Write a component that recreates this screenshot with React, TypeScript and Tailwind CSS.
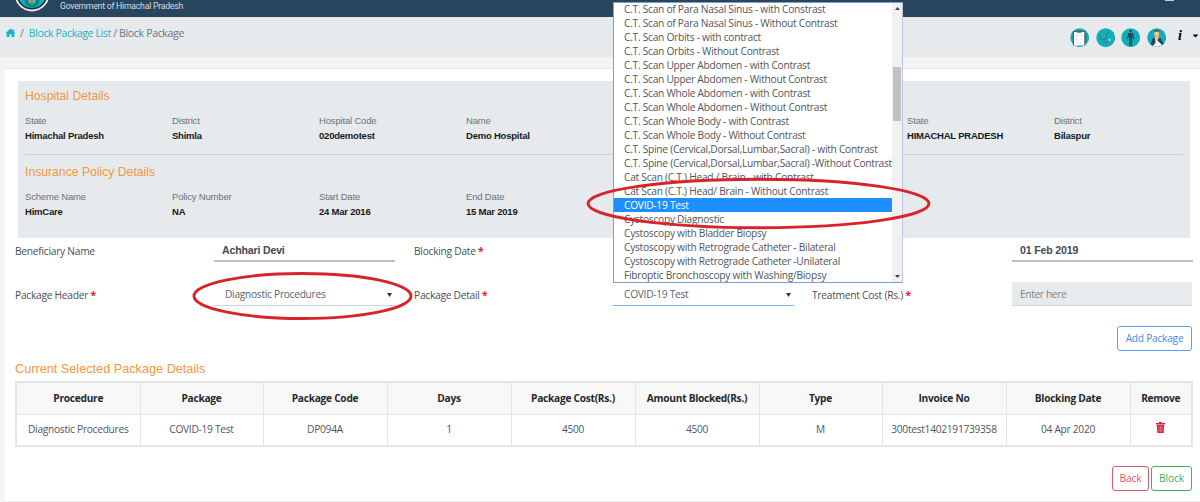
import { FaCaretDown } from "react-icons/fa";

type Detail = {
  label: string;
  value: string;
  col?: string;
};

const HOSPITAL: Detail[] = [
  { label: "State", value: "Himachal Pradesh" },
  { label: "District", value: "Shimla" },
  { label: "Hospital Code", value: "020demotest" },
  { label: "Name", value: "Demo Hospital" },
  { label: "State", value: "HIMACHAL PRADESH", col: "col-start-7" },
  { label: "District", value: "Bilaspur" },
];

const POLICY: Detail[] = [
  { label: "Scheme Name", value: "HimCare" },
  { label: "Policy Number", value: "NA" },
  { label: "Start Date", value: "24 Mar 2016" },
  { label: "End Date", value: "15 Mar 2019" },
];

const OPTIONS = [
  "C.T. Scan of Para Nasal Sinus - with Constrast",
  "C.T. Scan of Para Nasal Sinus - Without Contrast",
  "C.T. Scan Orbits - with contract",
  "C.T. Scan Orbits - Without Contrast",
  "C.T. Scan Upper Abdomen - with Contrast",
  "C.T. Scan Upper Abdomen - Without Contrast",
  "C.T. Scan Whole Abdomen - with Contrast",
  "C.T. Scan Whole Abdomen - Without Contrast",
  "C.T. Scan Whole Body - with Contrast",
  "C.T. Scan Whole Body - Without Contrast",
  "C.T. Spine (Cervical,Dorsal,Lumbar,Sacral) - with Contrast",
  "C.T. Spine (Cervical,Dorsal,Lumbar,Sacral) -Without Contrast",
  "Cat Scan (C.T.) Head / Brain - with Contrast",
  "Cat Scan (C.T.) Head/ Brain - Without Contrast",
  "COVID-19 Test",
  "Cystoscopy Diagnostic",
  "Cystoscopy with Bladder Biopsy",
  "Cystoscopy with Retrograde Catheter - Bilateral",
  "Cystoscopy with Retrograde Catheter -Unilateral",
  "Fibroptic Bronchoscopy with Washing/Biopsy",
];

const SELECTED = "COVID-19 Test";

const HEADERS = [
  "Procedure",
  "Package",
  "Package Code",
  "Days",
  "Package Cost(Rs.)",
  "Amount Blocked(Rs.)",
  "Type",
  "Invoice No",
  "Blocking Date",
  "Remove",
];

const ROW = [
  "Diagnostic Procedures",
  "COVID-19 Test",
  "DP094A",
  "1",
  "4500",
  "4500",
  "M",
  "300test1402191739358",
  "04 Apr 2020",
];

const Title = ({ children, size = "text-[12.2px]" }: { children: React.ReactNode; size?: string }) => (
  <h3 className={`font-['Liberation_Sans',sans-serif] leading-4 text-[#f7953b] ${size}`}>
    {children}
  </h3>
);

const DetailGrid = ({ items }: { items: Detail[] }) => (
  <div className="grid grid-cols-[repeat(8,147px)] font-['Liberation_Sans',sans-serif]">
    {items.map((d, i) => (
      <div key={i} className={d.col}>
        <p className="text-[9.5px] leading-[15px] tracking-[-0.17px] text-[#6d7276]">{d.label}</p>
        <p className="text-[9.5px] leading-[15px] font-bold tracking-[-0.22px] text-[#16191c]">{d.value}</p>
      </div>
    ))}
  </div>
);

const Label = ({ children, required }: { children: string; required?: boolean }) => (
  <label className="self-center pt-[3px] text-[10.2px] tracking-[-0.25px] whitespace-nowrap text-[#4a4f55]">
    {children}
    {required && <span className="font-bold text-[#e5202b]"> *</span>}
  </label>
);

const Select = ({ value, border }: { value: string; border: string }) => (
  <div className={`flex h-6 w-[181px] items-center justify-between border-b pt-0.5 pr-[3px] pl-[11px] text-[10.2px] tracking-[-0.28px] text-[#5c636a] ${border}`}>
    <span>{value}</span>
    <svg width="5" height="4" viewBox="0 0 5 4">
      <path d="M0 0h5L2.5 4z" fill="#333" />
    </svg>
  </div>
);

const TextValue = ({ value }: { value: string }) => (
  <div className="h-6 w-[181px] border-b-2 border-[#bcc2cd] pl-2 font-['Liberation_Sans',sans-serif] text-[10.6px] leading-6 font-bold tracking-[-0.18px] text-[#434a54]">
    {value}
  </div>
);

const Logo = () => (
  <svg className="absolute top-0 left-[15px]" width="35" height="12" viewBox="0 0 35 12">
    <circle cx="17" cy="-6" r="16.5" fill="#1d2f3f" stroke="#f3f0ee" strokeWidth="1.8" />
    <circle cx="17" cy="-6" r="14" fill="#12afb8" />
    <path d="M9 0h5l3 6-1 2-4-2zM25 0h-5l-3 6 1 2 4-2z" fill="#0d8490" />
    <path d="M13 0h3v3l-1 1zM18 0h3l-2 4-1-1z" fill="#c4a04d" />
  </svg>
);

const HomeIcon = () => (
  <svg width="11" height="10" viewBox="0 0 11 10">
    <path d="M5.500.5 7.600 2.500V1.200h1.300v2.500L10.600 5.300H9.300V9H6.500V6.200h-2V9H1.700V5.300H.4z" fill="#12b5c9" />
  </svg>
);

const HeaderIcons = () => (
  <div className="flex items-center gap-[6px]">
    {/* claim form */}
    <svg width="19.4" height="19.4" viewBox="0 0 20 20">
      <circle cx="10" cy="10" r="9.7" fill="#12afb8" />
      <rect x="3" y="3" width="12.6" height="15.2" rx="1" fill="#394d5c" />
      <rect x="4" y="4" width="10.8" height="14.2" fill="#fff" />
      <rect x="7" y="2.4" width="5" height="2.5" rx=".6" fill="#546776" />
      <path d="M6 7h2v2H6zM6 11h2v2H6z" fill="#d5e0e6" />
      <path d="M9.5 8h4M9.5 12h4M6 15.5h6" stroke="#dbe2e6" strokeWidth=".8" />
      <path d="m15.5 6 1.7 1-1 9-1-1z" fill="#287a76" />
    </svg>
    {/* stethoscope */}
    <svg width="19.4" height="19.4" viewBox="0 0 20 20">
      <circle cx="10" cy="10" r="9.7" fill="#12afb8" />
      <path d="M3.5 6.5c0 4 2 5.500 4.300 5.500s3.500-2.400 3.200-5M7.500 12c.5 3.800 5 4.200 6 .6M11 7l1.400-2.500" fill="none" stroke="#2a86a0" strokeWidth="1.2" strokeLinecap="round" />
      <circle cx="14" cy="12.3" r="1.4" fill="#d5e9e8" stroke="#50999f" strokeWidth=".7" />
    </svg>
    {/* patient */}
    <svg width="19.4" height="19.4" viewBox="0 0 20 20">
      <circle cx="10" cy="10" r="9.7" fill="#12afb8" />
      <circle cx="10" cy="3.2" r="1.5" fill="#27485d" />
      <path d="M7.5 5.2h5l1.4 6-1 .3-1.1-3.2-.4 10H8.600l-.4-10-1.100 3.200-1-.3z" fill="#27485d" />
      <path d="M10 10v8" stroke="#127f8b" strokeWidth=".7" />
    </svg>
    {/* doctor */}
    <svg width="19.4" height="19.4" viewBox="0 0 20 20">
      <circle cx="10" cy="10" r="9.7" fill="#12afb8" />
      <path d="M4 17 5.500 11l4-1.800 4.600 1.500 3 5.300c-3.500 4.200-9 4.500-13.100 1z" fill="#2c4356" />
      <path d="M8 7.500h4.200v3.300L10 13l-2-2.500z" fill="#e8bd8a" />
      <ellipse cx="10" cy="5.300" rx="2.600" ry="3.100" fill="#efc38f" />
      <path d="M7 5C6.800.8 13.300.6 13 5l-1.300-1.500H8.400z" fill="#5b3b26" />
      <path d="m8.500 10 1.800 2.500 5.200 5c-2.500 2-6.500 2.500-9.500 1l2.800-3.500z" fill="#f4f7f8" />
    </svg>
  </div>
);

const App: React.FC = () => {
  return (
    <div className="relative h-[502px] w-[1200px] overflow-hidden bg-[#f4f4f4] font-['Open_Sans','Noto_Sans',sans-serif]">
      <header className="relative flex h-[17px] bg-[#27455c] pl-[60px]">
        <Logo />
        <span className="font-['Roboto',sans-serif] text-[8.7px] leading-[13px] tracking-[-0.24px] text-[#d3dce2]">
          Government of Himachal Pradesh
        </span>
        <span className="absolute top-0 left-[1165px] h-px w-[9px] bg-[#c3d2dd]" />
      </header>

      {/* Breadcrumb */}
      <div className="flex h-10 items-start justify-between bg-[#e7eaed] pl-[5px]">
        <nav className="flex items-center pt-2 text-[10.5px] leading-4 whitespace-pre text-[#6f757b]">
          <HomeIcon />
          <span className="pl-1">/</span>
          <a className="pl-[5px] tracking-[-0.38px] text-[#19b3c8]">Block Package List</a>
          <span className="tracking-[-0.33px]"> / Block Package</span>
        </nav>
        <div className="flex items-center pt-[11px]">
          <HeaderIcons />
          <span className="-mt-1 ml-3 w-[13px] font-['Liberation_Serif',serif] text-[14px] leading-4 font-bold text-black italic">
            i
          </span>
          <FaCaretDown className="-mt-1 size-[9px] text-black" />
        </div>
      </div>

      <main className="mt-[11px] ml-[5px] h-[434px] border-t border-b border-[#eaeaea] bg-white pt-3">
        <section className="ml-[13px] h-[157px] w-[1172px] bg-[#e7eaed] px-[7px] pt-[7px]">
          <Title>Hospital Details</Title>
          <div className="mt-[9px]">
            <DetailGrid items={HOSPITAL} />
          </div>
          <hr className="mt-[11px] mb-[9px] border-[#cdd1d5]" />
          <Title>Insurance Policy Details</Title>
          <div className="mt-[9px]">
            <DetailGrid items={POLICY} />
          </div>
        </section>

        {/* Package form */}
        <section className="ml-[10px] grid grid-cols-[199px_200px_199px_199px_200px_180px]">
          <Label>Beneficiary Name</Label>
          <TextValue value="Achhari Devi" />
          <Label required>Blocking Date</Label>
          <div />
          <div />
          <TextValue value="01 Feb 2019" />
        </section>
        <section className="mt-5 ml-[10px] grid grid-cols-[199px_200px_199px_199px_200px_180px]">
          <Label required>Package Header</Label>
          <Select value="Diagnostic Procedures" border="border-[#cdd3dd]" />
          <Label required>Package Detail</Label>
          <Select value="COVID-19 Test" border="border-[#7db4ee]" />
          <Label required>Treatment Cost (Rs.)</Label>
          <div className="h-6 border-b border-[#d0d5da] bg-[#e8ebee] pl-2 text-[10.2px] leading-6 tracking-[-0.35px] text-[#7b838a]">
            Enter here
          </div>
        </section>

        <div className="mt-5 flex justify-end pr-2">
          <button className="h-[25px] w-[75px] rounded-[3px] border border-[#5b9ff2] pt-px text-[10.2px] tracking-[-0.25px] text-[#3f8cec]">
            Add Package
          </button>
        </div>

        {/* Selected packages */}
        <div className="mt-[10px] ml-[10px]">
          <Title size="text-[12.7px]">Current Selected Package Details</Title>
        </div>
        <table className="mt-1 ml-[10px] w-[1178px] table-fixed border-collapse border-2 border-[#e4e5e7] text-center text-[10.2px] tracking-[-0.28px]">
          <colgroup>
            <col className="w-[124px]" />
            <col className="w-[123px]" />
            <col className="w-[124px]" />
            <col className="w-[124px]" />
            <col className="w-[124px]" />
            <col className="w-[124px]" />
            <col className="w-[123px]" />
            <col className="w-[124px]" />
            <col className="w-[124px]" />
            <col />
          </colgroup>
          <thead>
            <tr className="h-8 bg-[#f8f8f9] text-[#25292d]">
              {HEADERS.map((h) => (
                <th key={h} className="border border-[#e4e5e7] p-0 font-bold whitespace-nowrap">
                  {h}
                </th>
              ))}
            </tr>
          </thead>
          <tbody>
            <tr className="h-8 text-[#50565e]">
              {ROW.map((cell, i) => (
                <td key={i} className="border border-[#e4e5e7] p-0 whitespace-nowrap">
                  {cell}
                </td>
              ))}
              <td className="border border-[#e4e5e7] p-0">
                <svg className="mx-auto -mt-1" width="9" height="11" viewBox="0 0 9 11">
                  <path d="M0 1h3V0h3v1h3v1.500H0zM.7 3h7.600l-.700 8H1.400z" fill="#d6224a" />
                  <path d="M3 4v6M4.500 4v6M6 4v6" stroke="#f0a5b5" strokeWidth=".5" />
                </svg>
              </td>
            </tr>
          </tbody>
        </table>

        <div className="mt-[19px] flex justify-end gap-[2px] pr-2 text-[10.2px] tracking-[-0.15px]">
          <button className="h-[25px] w-[37px] rounded-[3px] border border-[#dc5a69] pt-px text-[#dd5564]">
            Back
          </button>
          <button className="h-[25px] w-[41px] rounded-[3px] border border-[#45ad60] pt-px text-[#45ad60]">
            Block
          </button>
        </div>
      </main>

      {/* Package detail dropdown */}
      <div className="absolute top-[2px] left-[613px] flex h-[281px] w-[290px] border border-[#7f9fd0] border-r-[#b9c6df] bg-white">
        <ul className="-mt-px w-[278px] text-[10.2px] leading-[14px] tracking-[-0.26px] whitespace-nowrap text-[#50565e]">
          {OPTIONS.map((o) => (
            <li
              key={o}
              className={o === SELECTED ? "h-[14px] bg-[#1e8fff] pl-[10px] text-white" : "h-[14px] pl-[10px]"}
            >
              {o}
            </li>
          ))}
        </ul>
        <div className="flex flex-1 flex-col items-center justify-between bg-[#f1f1f1] py-1">
          <svg width="5" height="3" viewBox="0 0 5 3">
            <path d="M0 3h5L2.500 0z" fill="#444" />
          </svg>
          <svg width="5" height="3" viewBox="0 0 5 3">
            <path d="M0 0h5L2.500 3z" fill="#444" />
          </svg>
        </div>
        <div className="absolute top-[64px] right-[1px] h-[54px] w-2 bg-[#c1c1c1]" />
      </div>

      {/* Highlight rings */}
      <svg className="absolute top-[176px] left-[585px]" width="348" height="56" viewBox="0 0 348 56">
        <ellipse cx="173.500" cy="27.500" rx="170.500" ry="24.300" fill="none" stroke="#d8232b" strokeWidth="2.900" />
      </svg>
      <svg className="absolute top-[270px] left-[190px]" width="224" height="52" viewBox="0 0 224 52">
        <ellipse cx="112.500" cy="26" rx="108.500" ry="22.500" fill="none" stroke="#d8232b" strokeWidth="2.900" />
      </svg>
    </div>
  );
};

export default App;
